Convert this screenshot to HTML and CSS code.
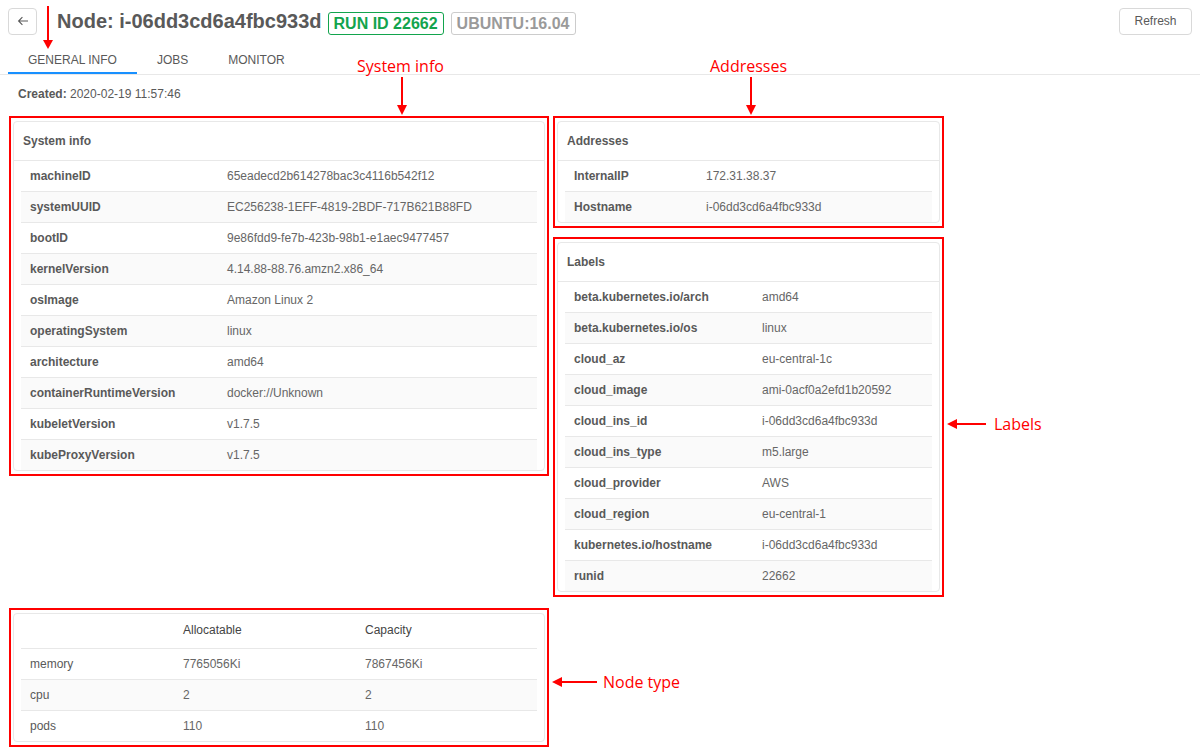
FILE: index.html
```html
<!DOCTYPE html>
<html lang="en">
<head>
<meta charset="utf-8">
<title>Node: i-06dd3cd6a4fbc933d</title>
<link rel="stylesheet" href="styles.css">
</head>
<body>
<div class="page">
  <header class="header">
    <button class="back-btn" aria-label="Back">
      <svg width="12" height="12" viewBox="0 0 12 12"><path d="M11 6H1.6M5.4 2.2L1.6 6l3.8 3.8" fill="none" stroke="#595959" stroke-width="1.1"/></svg>
    </button>
    <h1 class="title">Node: i-06dd3cd6a4fbc933d</h1>
    <span class="tag tag-green">RUN ID 22662</span>
    <span class="tag tag-gray">UBUNTU:16.04</span>
    <button class="refresh-btn">Refresh</button>
  </header>

  <nav class="tabs">
    <div class="tab active">GENERAL INFO</div>
    <div class="tab">JOBS</div>
    <div class="tab">MONITOR</div>
  </nav>

  <main class="content">
    <div class="created"><b>Created:</b> 2020-02-19 11:57:46</div>

    <div class="cards-row">
      <section class="card card-system">
        <div class="card-head">System info</div>
        <table class="kv">
          <colgroup><col class="c-sys"><col></colgroup>
          <tbody>
            <tr><td class="k">machineID</td><td class="v">65eadecd2b614278bac3c4116b542f12</td></tr>
            <tr><td class="k">systemUUID</td><td class="v">EC256238-1EFF-4819-2BDF-717B621B88FD</td></tr>
            <tr><td class="k">bootID</td><td class="v">9e86fdd9-fe7b-423b-98b1-e1aec9477457</td></tr>
            <tr><td class="k">kernelVersion</td><td class="v">4.14.88-88.76.amzn2.x86_64</td></tr>
            <tr><td class="k">osImage</td><td class="v">Amazon Linux 2</td></tr>
            <tr><td class="k">operatingSystem</td><td class="v">linux</td></tr>
            <tr><td class="k">architecture</td><td class="v">amd64</td></tr>
            <tr><td class="k">containerRuntimeVersion</td><td class="v">docker://Unknown</td></tr>
            <tr><td class="k">kubeletVersion</td><td class="v">v1.7.5</td></tr>
            <tr><td class="k">kubeProxyVersion</td><td class="v">v1.7.5</td></tr>
          </tbody>
        </table>
      </section>

      <div class="right-col">
        <section class="card card-addresses">
          <div class="card-head">Addresses</div>
          <table class="kv">
            <colgroup><col class="c-addr"><col></colgroup>
            <tbody>
              <tr><td class="k">InternalIP</td><td class="v">172.31.38.37</td></tr>
              <tr><td class="k">Hostname</td><td class="v">i-06dd3cd6a4fbc933d</td></tr>
            </tbody>
          </table>
        </section>

        <section class="card card-labels">
          <div class="card-head">Labels</div>
          <table class="kv">
            <colgroup><col class="c-lab"><col></colgroup>
            <tbody>
              <tr><td class="k">beta.kubernetes.io/arch</td><td class="v">amd64</td></tr>
              <tr><td class="k">beta.kubernetes.io/os</td><td class="v">linux</td></tr>
              <tr><td class="k">cloud_az</td><td class="v">eu-central-1c</td></tr>
              <tr><td class="k">cloud_image</td><td class="v">ami-0acf0a2efd1b20592</td></tr>
              <tr><td class="k">cloud_ins_id</td><td class="v">i-06dd3cd6a4fbc933d</td></tr>
              <tr><td class="k">cloud_ins_type</td><td class="v">m5.large</td></tr>
              <tr><td class="k">cloud_provider</td><td class="v">AWS</td></tr>
              <tr><td class="k">cloud_region</td><td class="v">eu-central-1</td></tr>
              <tr><td class="k">kubernetes.io/hostname</td><td class="v">i-06dd3cd6a4fbc933d</td></tr>
              <tr><td class="k">runid</td><td class="v">22662</td></tr>
            </tbody>
          </table>
        </section>
      </div>
    </div>

    <section class="card card-nodetype">
      <table class="kv res">
        <colgroup><col class="c-res1"><col class="c-res2"><col></colgroup>
        <thead>
          <tr><th></th><th>Allocatable</th><th>Capacity</th></tr>
        </thead>
        <tbody>
          <tr><td class="n">memory</td><td class="v">7765056Ki</td><td class="v">7867456Ki</td></tr>
          <tr><td class="n">cpu</td><td class="v">2</td><td class="v">2</td></tr>
          <tr><td class="n">pods</td><td class="v">110</td><td class="v">110</td></tr>
        </tbody>
      </table>
    </section>
  </main>

  <svg class="annot-svg" width="1200" height="753" viewBox="0 0 1200 753">
    <g stroke="#ff0000" stroke-width="2" fill="none">
      <line x1="48" y1="6" x2="48" y2="41"/>
      <line x1="402" y1="77" x2="402" y2="106"/>
      <line x1="751" y1="77" x2="751" y2="106"/>
      <line x1="956" y1="424" x2="986" y2="424"/>
      <line x1="561" y1="682" x2="597" y2="682"/>
    </g>
    <g fill="#ff0000">
      <polygon points="43,40 53,40 48,49"/>
      <polygon points="397,105 407,105 402,115"/>
      <polygon points="746,105 756,105 751,115"/>
      <polygon points="947,424 957,419 957,429"/>
      <polygon points="552,682 562,677 562,687"/>
    </g>
  </svg>
  <div class="annot a-system">System info</div>
  <div class="annot a-addresses">Addresses</div>
  <div class="annot a-labels">Labels</div>
  <div class="annot a-nodetype">Node type</div>
</div>
</body>
</html>
```

FILE: styles.css
```css
* { box-sizing: border-box; }

html, body {
  margin: 0;
  padding: 0;
  background: #fff;
}

body {
  font-family: "Liberation Sans", Arial, sans-serif;
  font-size: 12px;
  color: #595959;
}

.page {
  position: relative;
  width: 1200px;
  height: 753px;
  overflow: hidden;
}

/* Header */
.header {
  display: flex;
  align-items: center;
  height: 28px;
  margin-top: 7px;
  padding: 0 8px;
}

.back-btn {
  width: 29px;
  height: 27px;
  padding: 0;
  display: flex;
  align-items: center;
  justify-content: center;
  background: #fff;
  border: 1px solid #d9d9d9;
  border-radius: 4px;
}

.title {
  margin: 0 0 0 20px;
  font-size: 20px;
  line-height: 28px;
  font-weight: bold;
  color: #595959;
}

.tag {
  align-self: flex-end;
  height: 23px;
  line-height: 21px;
  padding: 0 5px;
  font-size: 16px;
  font-weight: bold;
  border: 1px solid;
  border-radius: 3px;
}

.tag-green {
  margin-left: 6px;
  color: #12a44d;
  border-color: #12a44d;
}

.tag-gray {
  margin-left: 7px;
  color: #9a9a9a;
  border-color: #cccccc;
}

.refresh-btn {
  margin-left: auto;
  height: 27px;
  padding: 0 14.5px;
  font-family: "Liberation Sans", Arial, sans-serif;
  font-size: 12px;
  color: #595959;
  background: #fff;
  border: 1px solid #d9d9d9;
  border-radius: 4px;
}

/* Tabs */
.tabs {
  display: flex;
  margin-top: 9px;
  padding-left: 8px;
  border-bottom: 1px solid #e8e8e8;
}

.tab {
  padding: 8px 20px 6px;
  line-height: 16px;
  font-size: 12px;
  color: #595959;
}

.tab.active {
  box-shadow: inset 0 -2px 0 #1890ff;
}

/* Content */
.content {
  padding: 11px 0 0 13px;
}

.created {
  margin-left: 5px;
  line-height: 16px;
  color: #595959;
}

.created b { font-weight: bold; }

.cards-row {
  display: flex;
  align-items: flex-start;
  gap: 12px;
  margin-top: 19px;
}

.right-col {
  width: 383px;
  display: flex;
  flex-direction: column;
  gap: 19px;
}

.card {
  position: relative;
  background: #fff;
  border: 1px solid #e8e8e8;
  border-radius: 4px;
}

/* red annotation frame around each card */
.card::after {
  content: "";
  position: absolute;
  top: -6px;
  left: -5px;
  right: -5px;
  bottom: -6px;
  border: 2px solid #ff0000;
  pointer-events: none;
}

.card-system { width: 532px; }
.card-nodetype { width: 532px; margin-top: 21px; }

.card-head {
  height: 39px;
  line-height: 38px;
  padding: 0 9px;
  font-weight: bold;
  color: #595959;
  border-bottom: 1px solid #e8e8e8;
}

/* Key/value tables */
.kv {
  width: calc(100% - 14px);
  margin: 0 7px;
  border-collapse: separate;
  border-spacing: 0;
  table-layout: fixed;
}

.kv td,
.kv th {
  box-sizing: content-box;
  height: 30px;
  padding: 0 9px;
  line-height: 16px;
  text-align: left;
  vertical-align: middle;
  white-space: nowrap;
}

.kv tbody tr + tr td {
  border-top: 1px solid #e8e8e8;
}

.kv tbody tr:nth-child(even) td {
  background: #fafafa;
}

.kv td.k {
  font-weight: bold;
  color: #595959;
}

.kv td.v {
  color: #666;
}

.kv td.n {
  color: #595959;
}

.c-sys { width: 197px; }
.c-addr { width: 132px; }
.c-lab { width: 188px; }
.c-res1 { width: 153px; }
.c-res2 { width: 182px; }

.res th {
  height: 32px;
  padding-bottom: 2px;
  font-weight: normal;
  color: #444;
}

.res tbody tr td {
  border-top: 1px solid #e8e8e8;
}

/* Annotations overlay */
.annot-svg {
  position: absolute;
  top: 0;
  left: 0;
  pointer-events: none;
}

.annot {
  position: absolute;
  font-family: "Open Sans", "Liberation Sans", sans-serif;
  font-size: 16px;
  line-height: 22px;
  color: #ff0000;
  white-space: nowrap;
}

.a-system { left: 357px; top: 55px; }
.a-addresses { left: 710px; top: 55px; }
.a-labels { left: 994px; top: 413px; }
.a-nodetype { left: 603px; top: 671px; }
```
